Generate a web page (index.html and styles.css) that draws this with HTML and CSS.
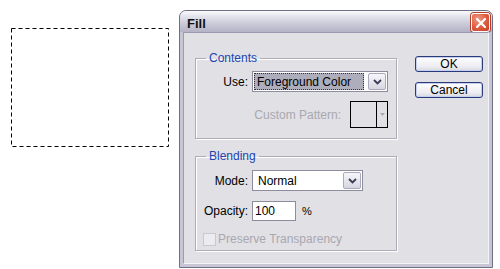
FILE: index.html
```html
<!DOCTYPE html>
<html>
<head>
<meta charset="utf-8">
<link rel="stylesheet" href="styles.css">
</head>
<body>
<div class="stage">
  <div class="selection">
    <svg width="158" height="119" viewBox="0 0 158 119"><rect x="0.5" y="0.5" width="157" height="118" fill="none" stroke="#000" stroke-width="1" stroke-dasharray="4 3"/></svg>
  </div>
  <div class="dialog">
    <div class="titlebar">
      <span class="title">Fill</span>
      <span class="close">
        <svg width="12" height="12" viewBox="0 0 12 12"><path d="M2 2 L10 10 M10 2 L2 10" stroke="#fff" stroke-width="2.2" stroke-linecap="round"/></svg>
      </span>
    </div>
    <div class="body">
      <div class="groups">
        <fieldset class="group contents">
          <legend>Contents</legend>
          <div class="row use-row">
            <span class="label">Use:</span>
            <div class="select use-select">
              <span class="value selected"><span class="focus">Foreground Color</span></span>
              <span class="drop"><svg width="9" height="6" viewBox="0 0 9 6"><path d="M1 1 L4.5 4.5 L8 1" fill="none" stroke="#3c3c54" stroke-width="1.8"/></svg></span>
            </div>
          </div>
          <div class="row pattern-row">
            <span class="label disabled">Custom Pattern:</span>
            <div class="pattern">
              <span class="swatch"></span>
              <span class="pdrop"><svg width="5" height="3" viewBox="0 0 5 3"><path d="M0 0 L5 0 L2.5 3 Z" fill="#a8a8b0"/></svg></span>
            </div>
          </div>
        </fieldset>
        <fieldset class="group blending">
          <legend>Blending</legend>
          <div class="row mode-row">
            <span class="label">Mode:</span>
            <div class="select mode-select">
              <span class="value">Normal</span>
              <span class="drop"><svg width="9" height="6" viewBox="0 0 9 6"><path d="M1 1 L4.5 4.5 L8 1" fill="none" stroke="#3c3c54" stroke-width="1.8"/></svg></span>
            </div>
          </div>
          <div class="row opacity-row">
            <span class="label">Opacity:</span>
            <div class="input">100</div>
            <span class="unit">%</span>
          </div>
          <div class="row check-row">
            <span class="checkbox"></span>
            <span class="disabled">Preserve Transparency</span>
          </div>
        </fieldset>
      </div>
      <div class="buttons">
        <div class="btn">OK</div>
        <div class="btn">Cancel</div>
      </div>
    </div>
  </div>
</div>
</body>
</html>
```
FILE: styles.css
```css
html, body {
  margin: 0;
  padding: 0;
  background: #fff;
  width: 500px;
  height: 269px;
  overflow: hidden;
  font-family: "Liberation Sans", Arial, sans-serif;
  font-size: 12px;
  color: #000;
}
.stage {
  display: flex;
  align-items: flex-start;
}
.selection {
  margin-left: 11px;
  margin-top: 28px;
  width: 158px;
  height: 119px;
  flex: none;
}
.selection svg {
  display: block;
}
.dialog {
  flex: none;
  margin-left: 10px;
  margin-top: 10px;
  width: 312px;
  height: 256px;
  border: 1px solid #6e6e84;
  border-radius: 7px 7px 0 0;
  background: #c6c6d4;
  display: flex;
  flex-direction: column;
}
.titlebar {
  height: 21px;
  border-radius: 6px 6px 0 0;
  background: linear-gradient(#fbfbfd 0%, #e4e4ec 25%, #cbcbd9 60%, #b3b3c6 100%);
  display: flex;
  align-items: center;
  justify-content: space-between;
  padding: 0 2px 0 7px;
  flex: none;
}
.title {
  font-weight: bold;
  font-size: 13px;
  color: #101010;
  margin-top: 3px;
}
.close {
  width: 17px;
  height: 17px;
  border: 1px solid #fff;
  border-radius: 3px;
  background: radial-gradient(circle at 35% 30%, #f09a84, #dd5a3c 55%, #c4402a);
  display: flex;
  align-items: center;
  justify-content: center;
  margin-top: 2px;
  box-shadow: 0 0 0 1px #b04030;
}
.body {
  flex: 1;
  margin: 0 3px 3px 3px;
  border: 1px solid #9c9cb0;
  border-bottom-color: #f4f4f8;
  border-right-color: #f4f4f8;
  background: #e1e0e5;
  display: flex;
  padding: 18px 0 0 11px;
}
.groups {
  display: flex;
  flex-direction: column;
  width: 202px;
}
.group {
  margin: 0;
  padding: 0 8px 0 0;
  border: 1px solid #adadba;
  box-shadow: inset 1px 1px 0 #fff, 1px 1px 0 #fff;
  min-width: 0;
}
.group legend {
  color: #2046b0;
  padding: 0 3px;
  margin-left: 10px;
  line-height: 14px;
}
.contents {
  height: 86px;
}
.blending {
  margin-top: 10px;
  height: 100px;
}
.row {
  display: flex;
  align-items: center;
}
.label {
  width: 52px;
  text-align: right;
  margin-right: 4px;
  flex: none;
}
.disabled {
  color: #a8a8b0;
}
.use-row {
  margin-top: 6px;
}
.select {
  height: 19px;
  border: 1px solid #8c8c9e;
  background: #fff;
  display: flex;
  align-items: stretch;
}
.use-select {
  width: 134px;
}
.mode-select {
  width: 109px;
}
.value {
  flex: 1;
  display: flex;
  align-items: center;
  padding: 1px;
}
.value.selected .focus {
  flex: 1;
  align-self: stretch;
  display: flex;
  align-items: center;
  background: #adadbc;
  outline: 1px dotted #333;
  outline-offset: -1px;
  padding-left: 3px;
  margin-right: 2px;
}
.mode-select .value {
  padding-left: 5px;
}
.drop {
  width: 16px;
  border: 1px solid #a9a9bb;
  border-radius: 2px;
  margin: 1px;
  background: linear-gradient(#f6f6fa, #d7d7e2);
  display: flex;
  align-items: center;
  justify-content: center;
}
.pattern-row {
  margin-top: 9px;
  justify-content: flex-end;
}
.pattern-row .label {
  width: auto;
  margin-right: 9px;
}
.pattern {
  width: 36px;
  height: 25px;
  border: 1px solid #000;
  display: flex;
}
.swatch {
  width: 25px;
  border-right: 1px solid #000;
}
.pdrop {
  flex: 1;
  display: flex;
  align-items: center;
  justify-content: center;
}
.mode-row {
  margin-top: 7px;
}
.opacity-row {
  margin-top: 10px;
}
.input {
  width: 40px;
  height: 18px;
  border: 1px solid #8c8c9e;
  background: #fff;
  line-height: 18px;
  padding-left: 2px;
}
.unit {
  margin-left: 6px;
  font-size: 11px;
}
.check-row {
  margin-top: 11px;
  padding-left: 7px;
}
.checkbox {
  width: 11px;
  height: 11px;
  border: 1px solid #c8c8d0;
  background: #ececf0;
  margin-right: 2px;
}
.buttons {
  display: flex;
  flex-direction: column;
  margin-left: 18px;
  margin-top: 5px;
  gap: 10px;
}
.btn {
  width: 66px;
  height: 14px;
  border: 1px solid #2a3a7a;
  border-radius: 3px;
  background: linear-gradient(#ffffff, #ececf2 70%, #d6d6e0);
  text-align: center;
  line-height: 14px;
  box-shadow: inset 0 0 0 1px #c4cfee;
}
```
